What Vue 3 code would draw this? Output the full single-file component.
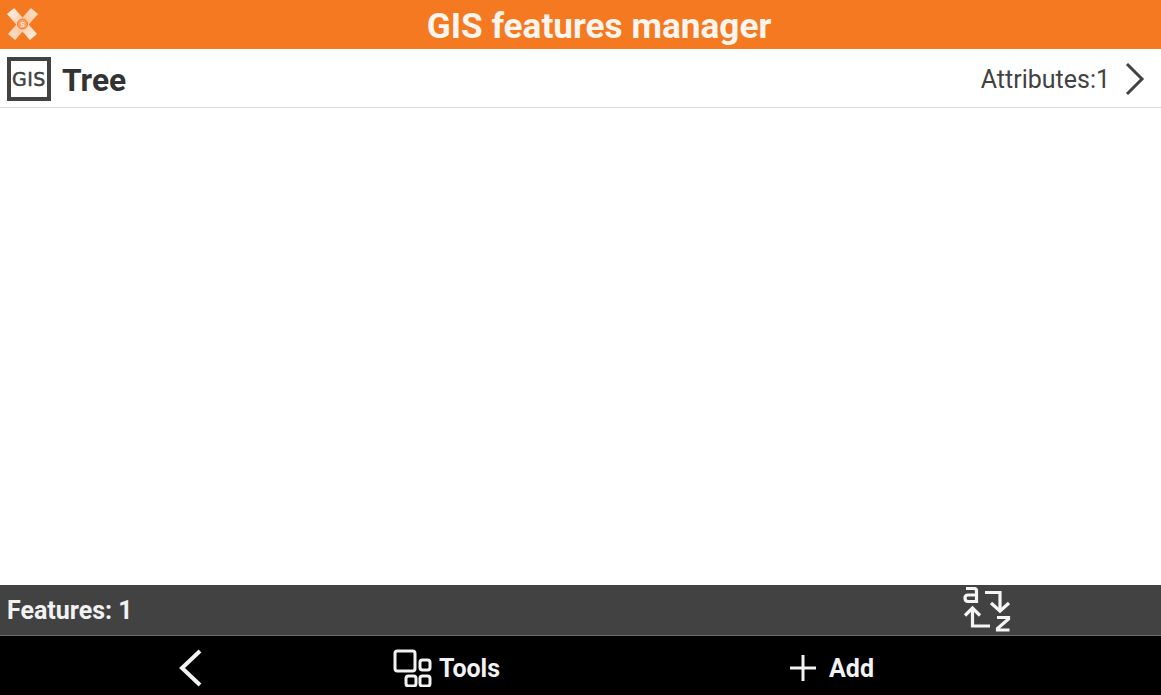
<script setup>
const titulo = 'GIS features manager'
const feature = { nombre: 'Tree', atributos: 1 }
const total = 1
</script>

<template>
  <div class="app">
    <header class="cabecera">
      <svg class="logo" width="34" height="36" viewBox="0 0 34 36">
        <defs>
          <linearGradient id="brazo1" x1="0" y1="0" x2="1" y2="1">
            <stop offset="0" stop-color="#fff3ea" />
            <stop offset="0.5" stop-color="#fbc8a3" />
            <stop offset="1" stop-color="#fff3ea" />
          </linearGradient>
          <linearGradient id="brazo2" x1="1" y1="0" x2="0" y2="1">
            <stop offset="0" stop-color="#fde3d0" />
            <stop offset="0.5" stop-color="#fbbf94" />
            <stop offset="1" stop-color="#fde3d0" />
          </linearGradient>
        </defs>
        <path d="M25 3 L31 8 L9 33 L3 28 Z" fill="url(#brazo2)" stroke="url(#brazo2)" stroke-width="1.500" stroke-linejoin="round" />
        <path d="M8 3 L2 8 L24 33 L30 28 Z" fill="url(#brazo1)" stroke="url(#brazo1)" stroke-width="1.500" stroke-linejoin="round" />
        <circle cx="16.500" cy="18" r="5" fill="#f9a266" stroke="#f47920" stroke-width="1" />
        <text x="16.500" y="21" text-anchor="middle" class="logo-s">s</text>
      </svg>
      <h1>{{ titulo }}</h1>
    </header>

    <div class="fila">
      <div class="gis">GIS</div>
      <span class="nombre">{{ feature.nombre }}</span>
      <span class="atributos">Attributes:{{ feature.atributos }}</span>
      <svg class="flecha" width="22" height="34" viewBox="0 0 22 34">
        <path d="M3 2 L18 17 L3 32" fill="none" stroke="#424242" stroke-width="3" />
      </svg>
    </div>

    <main class="contenido"></main>

    <div class="estado">
      <span>Features: {{ total }}</span>
      <svg class="orden" width="48" height="46" viewBox="0 0 48 46">
        <g fill="none" stroke="#f5f5f5" stroke-width="3.200">
          <path d="M3 1.500 H11 Q13.500 1.500 13.500 4 V14.500 H5 Q2 14.500 2 11 Q2 8 5 8 H13.500" />
          <path d="M22 5.500 H37 V23" />
          <path d="M28 16 L37 24 L46 16" />
          <path d="M9.500 22 V39 H27" />
          <path d="M2 28.500 L9.500 21 L17 28.500" />
          <path d="M34 30.500 H45.500 V32 L34.500 41.500 V43 H46.500" />
        </g>
      </svg>
    </div>

    <nav class="barra">
      <button class="atras">
        <svg width="26" height="38" viewBox="0 0 26 38">
          <path d="M22 2 L4 19 L22 36" fill="none" stroke="#f2f2f2" stroke-width="4" />
        </svg>
      </button>
      <button class="herramientas">
        <svg width="40" height="38" viewBox="0 0 40 38">
          <g fill="none" stroke="#f2f2f2" stroke-width="3">
            <rect x="2" y="2" width="20" height="20" rx="2.500" />
            <rect x="27" y="11" width="10" height="10" rx="2.500" />
            <rect x="13" y="27" width="10" height="10" rx="2.500" />
            <rect x="27" y="27" width="10" height="10" rx="2.500" />
          </g>
        </svg>
        <span>Tools</span>
      </button>
      <button class="agregar">
        <svg width="26" height="26" viewBox="0 0 26 26">
          <path d="M13 0 V26 M0 13 H26" stroke="#f2f2f2" stroke-width="3" />
        </svg>
        <span>Add</span>
      </button>
    </nav>
  </div>
</template>

<style>
html, body {
  margin: 0;
  background: #fff;
}
</style>

<style scoped>
.app {
  display: flex;
  flex-direction: column;
  height: 695px;
  font-family: Roboto, "Liberation Sans", sans-serif;
  overflow: hidden;
}

.cabecera {
  position: relative;
  flex: 0 0 49px;
  box-sizing: border-box;
  padding-top: 3px;
  display: flex;
  align-items: center;
  justify-content: center;
  background: #f47920;
}

.cabecera h1 {
  margin: 0 0 0 37px;
  font-size: 35.200px;
  font-weight: 700;
  color: #fff5ee;
}

.logo {
  position: absolute;
  left: 6px;
  top: 6px;
}

.logo-s {
  font-size: 9px;
  font-family: Roboto, sans-serif;
  fill: #fff;
}

.fila {
  flex: 0 0 59px;
  display: flex;
  align-items: center;
  padding: 1px 15px 0 7px;
  box-sizing: border-box;
  border-bottom: 1px solid #d9d9d9;
  color: #333;
}

.gis {
  box-sizing: border-box;
  width: 44px;
  height: 44px;
  border: 4px solid #424242;
  display: flex;
  align-items: center;
  justify-content: center;
  font-family: "DejaVu Sans", sans-serif;
  font-size: 19px;
  letter-spacing: 0.5px;
  -webkit-text-stroke: 0.5px #424242;
  color: #424242;
}

.nombre {
  margin-left: 11px;
  padding-top: 3px;
  font-size: 31.700px;
  font-weight: 700;
}

.atributos {
  margin-left: auto;
  margin-right: 14px;
  padding-top: 1px;
  font-size: 25px;
  color: #424242;
}

.contenido {
  flex: 1;
  background: #fff;
}

.estado {
  flex: 0 0 51px;
  display: flex;
  align-items: center;
  justify-content: space-between;
  box-sizing: border-box;
  padding: 0 150px 0 7px;
  background: #424242;
  border-bottom: 1px solid #6a6a6a;
  color: #f2f2f2;
  font-size: 25px;
  font-weight: 700;
}

.barra {
  flex: 0 0 59px;
  box-sizing: border-box;
  padding-top: 5px;
  display: flex;
  align-items: center;
  background: #000;
}

.barra button {
  display: flex;
  align-items: center;
  padding: 0;
  border: 0;
  background: none;
  color: #f2f2f2;
  font: 700 25px Roboto, "Liberation Sans", sans-serif;
}

.atras {
  margin-left: 178px;
}

.herramientas {
  margin-left: 189px;
  gap: 6px;
}

.agregar {
  margin-left: 290px;
  gap: 13px;
}
</style>
